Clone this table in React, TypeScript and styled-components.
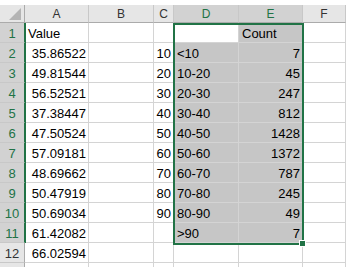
import React from 'react';
import styled, { createGlobalStyle, css } from 'styled-components';

const GREEN = '#217346';

const GlobalStyle = createGlobalStyle`
  html, body {
    margin: 0;
    padding: 0;
    background: #fff;
    overflow: hidden;
  }
  body {
    font-family: 'Liberation Sans', Arial, sans-serif;
  }
`;

const COLUMNS = ['A', 'B', 'C', 'D', 'E', 'F'];
const SELECTED_COLS = ['D', 'E'];
const SELECTED_ROWS = 11;
const LABELLED_ROWS = 12;

const values = [
  'Value', '35.86522', '49.81544', '56.52521', '37.38447', '47.50524',
  '57.09181', '48.69662', '50.47919', '50.69034', '61.42082', '66.02594', '',
];
const bins = ['', '10', '20', '30', '40', '50', '60', '70', '80', '90', '', '', ''];
const labels = ['', '<10', '10-20', '20-30', '30-40', '40-50', '50-60', '60-70', '70-80', '80-90', '>90', '', ''];
const counts = ['Count', '7', '45', '247', '812', '1428', '1372', '787', '245', '49', '7', '', ''];

const sheetTracks = css`
  display: grid;
  grid-template-columns: 25px 64px 65px 20px 65px 64px 1fr;
  grid-template-rows: 18px repeat(13, 20px);
`;

// sheet and selection layer share one grid cell so the layer sits on top
const Stack = styled.div`
  display: grid;
  width: 346px;
  margin-top: 5px;
  & > * {
    grid-area: 1 / 1;
  }
`;

const Sheet = styled.div`
  ${sheetTracks}
`;

const SelectionLayer = styled.div`
  ${sheetTracks}
  z-index: 2;
  pointer-events: none;
`;

const Corner = styled.div`
  display: flex;
  justify-content: flex-end;
  align-items: flex-end;
  padding: 0 3px 2px 0;
  background: #e6e6e6;
  border-right: 1px solid #ababab;
  border-bottom: 1px solid #ababab;
  &::after {
    content: '';
    width: 12px;
    height: 12px;
    background: #b4b4b4;
    clip-path: polygon(100% 0, 100% 100%, 0 100%);
  }
`;

const ColHeader = styled.div<{ $selected?: boolean }>`
  display: flex;
  align-items: center;
  justify-content: center;
  background: ${p => (p.$selected ? '#d2d2d2' : '#e6e6e6')};
  color: ${p => (p.$selected ? GREEN : '#333')};
  border-right: 1px solid #c8c8c8;
  border-bottom: 1px solid #ababab;
  font-size: 12px;
`;

const RowHeader = styled.div<{ $selected?: boolean }>`
  display: flex;
  align-items: flex-end;
  justify-content: center;
  background: ${p => (p.$selected ? '#d2d2d2' : '#e6e6e6')};
  color: ${p => (p.$selected ? GREEN : '#333')};
  border-right: 1px solid ${p => (p.$selected ? GREEN : '#ababab')};
  border-bottom: 1px solid #c8c8c8;
  box-shadow: ${p => (p.$selected ? `1px 0 0 ${GREEN}` : 'none')};
  position: relative;
  z-index: ${p => (p.$selected ? 1 : 0)};
  font-size: 13px;
  line-height: 16px;
`;

const Cell = styled.div<{ $align?: 'left' | 'right'; $fill?: boolean }>`
  display: flex;
  align-items: flex-end;
  justify-content: ${p => (p.$align === 'right' ? 'flex-end' : 'flex-start')};
  padding: ${p => (p.$align === 'right' ? '0 2px 0 0' : '0 0 0 3px')};
  background: ${p => (p.$fill ? '#c6c6c6' : '#fff')};
  border-right: 1px solid #d4d4d4;
  border-bottom: 1px solid #d4d4d4;
  color: #000;
  font-size: 13px;
  line-height: 16px;
  white-space: nowrap;
  overflow: hidden;
  min-width: 0;
`;

const Selection = styled.div`
  grid-column: 5 / 7;
  grid-row: 2 / 13;
  margin: 0 -1px -2px -1px;
  border: 2px solid ${GREEN};
  position: relative;
`;

const FillHandle = styled.span`
  position: absolute;
  right: -4px;
  bottom: -4px;
  width: 5px;
  height: 5px;
  background: ${GREEN};
  border: 1px solid #fff;
`;

const isNumber = (s: string) => /^[0-9.]+$/.test(s);

const App = () => {
  const rows = values.map((_, i) => i + 1);

  return (
    <>
      <GlobalStyle />
      <Stack>
        <Sheet>
          <Corner />
          {COLUMNS.map(c => (
            <ColHeader key={c} $selected={SELECTED_COLS.includes(c)}>{c}</ColHeader>
          ))}
          {rows.map((r, i) => {
            const inSel = r <= SELECTED_ROWS;
            return (
              <React.Fragment key={r}>
                <RowHeader $selected={inSel}>{r <= LABELLED_ROWS ? r : ''}</RowHeader>
                <Cell $align={isNumber(values[i]) ? 'right' : 'left'}>{values[i]}</Cell>
                <Cell />
                <Cell $align="right">{bins[i]}</Cell>
                <Cell $fill={inSel && r > 1}>{labels[i]}</Cell>
                <Cell $align={isNumber(counts[i]) ? 'right' : 'left'} $fill={inSel}>{counts[i]}</Cell>
                <Cell />
              </React.Fragment>
            );
          })}
        </Sheet>
        <SelectionLayer>
          <Selection>
            <FillHandle />
          </Selection>
        </SelectionLayer>
      </Stack>
    </>
  );
};

export default App;
